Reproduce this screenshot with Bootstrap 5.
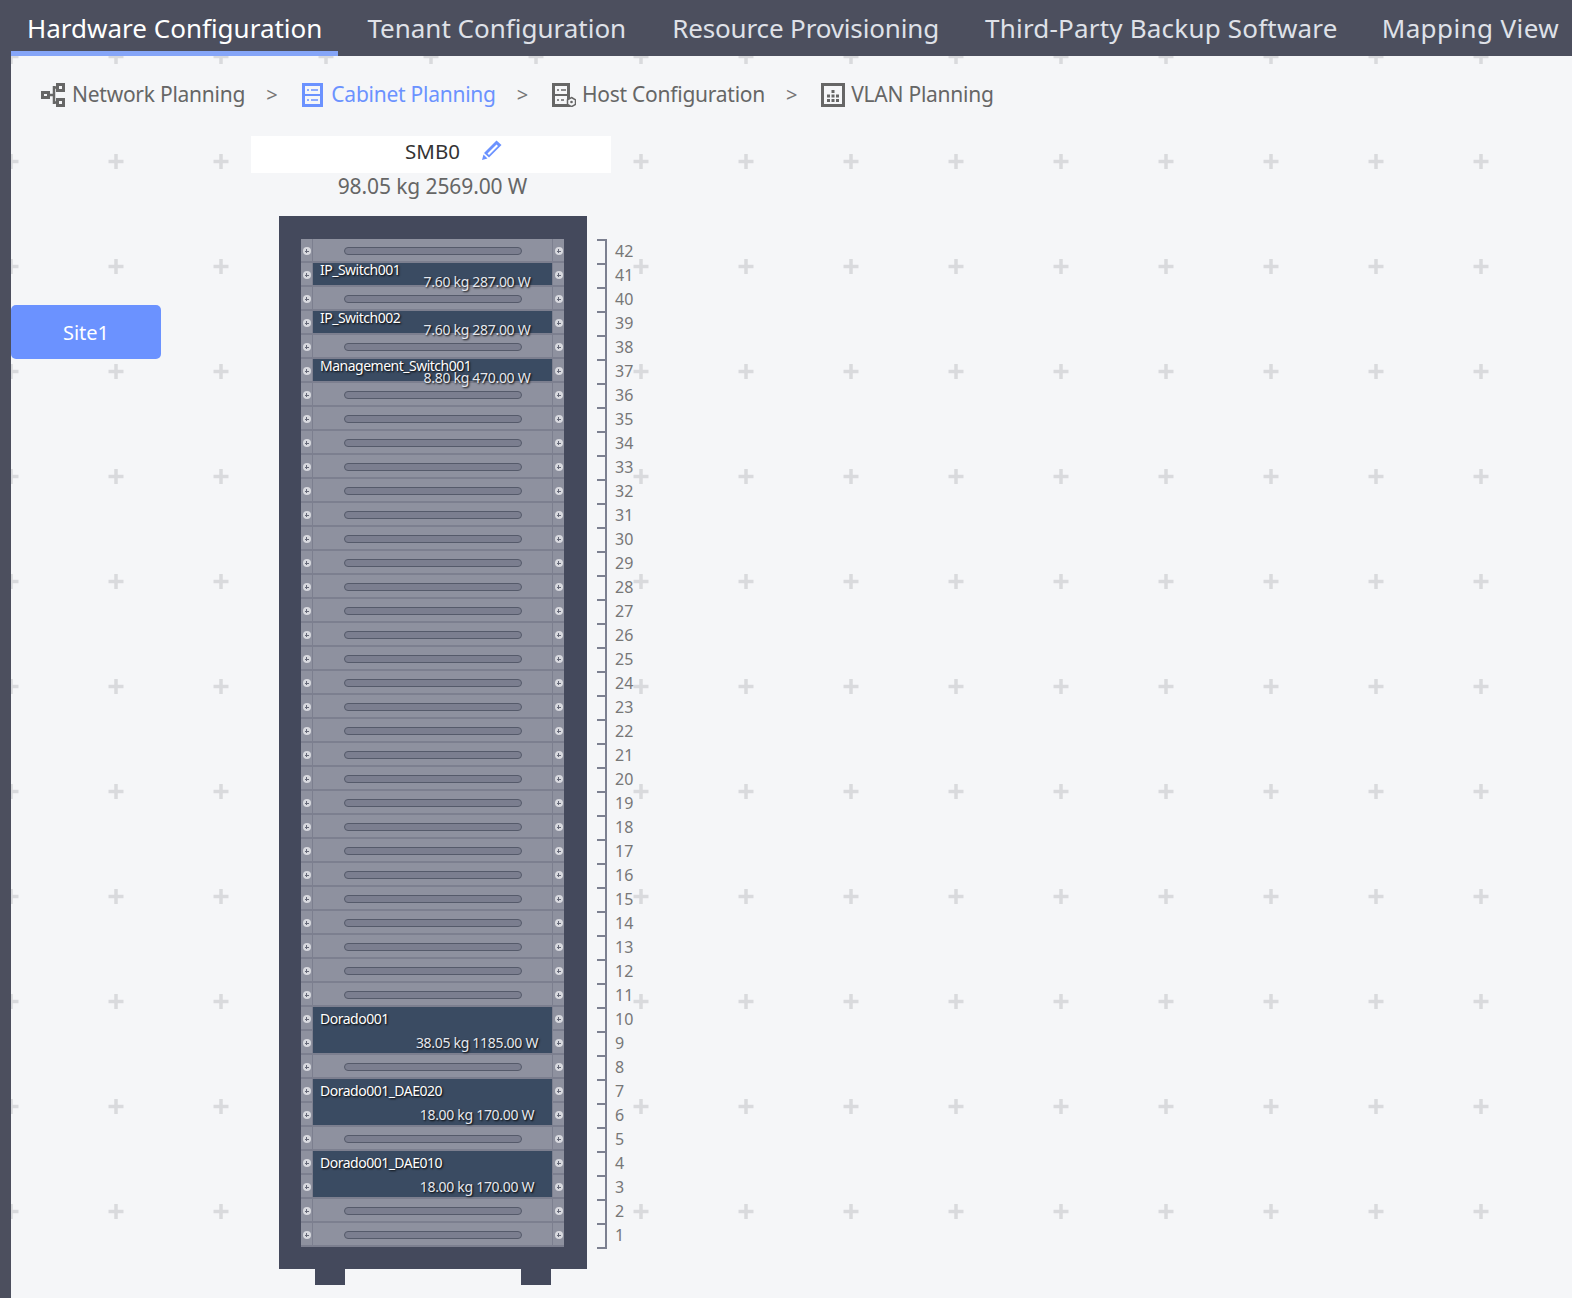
<!DOCTYPE html>
<html lang="en">
<head>
    <meta charset="UTF-8">
    <title>Cabinet Planning</title>
    <link href="https://cdn.jsdelivr.net/npm/bootstrap@5.3.0/dist/css/bootstrap.min.css" rel="stylesheet">
    <style>
        html, body { height: 100%; overflow: hidden; }
        body {
            font-family: "Noto Sans", sans-serif;
            background-color: #4c4f5e;
            padding-left: 11px;
        }
        .top-tabs { height: 56px; margin-left: -11px; padding-left: 11px; background: #4c4f5e; position: relative; z-index: 1; }
        .top-tab {
            padding: 0 16px;
            margin-right: 14px;
            height: 56px;
            font-size: 26px;
            color: #dfe1e8;
            white-space: nowrap;
            border-bottom: 5px solid transparent;
            text-decoration: none;
            line-height: 56px;
        }
        .top-tab.on { color: #fff; border-bottom-color: #85a5f8; margin-right: 13px; }
        .top-tab:nth-child(3) { letter-spacing: -.15px; }
        .top-tab:nth-child(4) { letter-spacing: .2px; margin-right: 12px; }
        .top-tab:nth-child(5) { letter-spacing: .4px; }
        .work-area {
            height: 1242px;
            background-color: #f5f6f8;
            background-image: url("data:image/svg+xml,%3Csvg xmlns='http://www.w3.org/2000/svg' width='105' height='105'%3E%3Cpath d='M44.500 52.500h15M52 45v15' stroke='%23d9dadd' stroke-width='3.500' fill='none'/%3E%3C/svg%3E");
            background-position: -52px -52px;
        }
        .flow-bar { height: 80px; padding: 0 0 2px 30px; font-size: 21px; letter-spacing: -.25px; color: #666; }
        .flow-step { color: #666; white-space: nowrap; gap: 6px; }
        .flow-step:first-child { gap: 7px; }
        .flow-step.on { color: #6b92ff; gap: 8px; }
        .flow-sep { margin: 0 25px 0 21px; font-size: 20px; color: #777; }
        .flow-step.on ~ .flow-sep { margin-right: 24px; }
        .site-col { width: 150px; margin-right: 90px; padding-top: 169px; }
        .site-btn {
            width: 150px; height: 54px; padding: 2px 0 0;
            background: #6b92ff; border: 0; border-radius: 5px;
            color: #fff; font-size: 20px;
        }
        .cab-col { width: 360px; }
        .cab-title { height: 37px; padding: 0 0 7px 3px; background: #fff; font-size: 20.500px; color: #333; }
        .cab-title svg { position: absolute; left: 100%; margin-left: 22px; top: 4px; }
        .cab-sub { height: 43px; padding-left: 3px; line-height: 26px; font-size: 21px; letter-spacing: -.1px; color: #666; text-align: center; }
        .cab-wrap { margin-left: 28px; }
        .cab-body { width: 308px; height: 1053px; padding: 23px 23px 0 22px; background: #44495c; }
        .cab-feet { width: 308px; padding: 0 36px; }
        .cab-foot { width: 30px; height: 16px; background: #44495c; }
        .rail { width: 12px; border-right: 1px solid #7c7f8f; background: #8e919f; }
        .rail.right { border-right: 0; border-left: 1px solid #7c7f8f; }
        .rail-cell { height: 24px; padding-top: 2px; border-bottom: 2px solid #7c7f8f; }
        .screw {
            width: 8px; height: 8px; border-radius: 50%;
            background: #d8d9df;
            position: relative;
        }
        .screw::before, .screw::after {
            content: ""; position: absolute; background: #666978;
        }
        .screw::before { left: 2px; top: 3.500px; width: 4px; height: 1px; }
        .screw::after { left: 3.500px; top: 2px; width: 1px; height: 4px; }
        .slots { width: 239px; }
        .slot { height: 24px; padding-top: 2px; background: #8e919f; border-bottom: 2px solid #7c7f8f; }
        .slot-bar { width: 178px; height: 8px; background: #7b7e8f; border: 1px solid #555a6a; border-radius: 4px; }
        .dev {
            background: #3a4b62; border-bottom: 2px solid #7c7f8f;
            padding-left: 7px; color: #fff; text-shadow: 1px 1px 2px #000;
            font-size: 14px; white-space: nowrap;
        }
        .dev-1u { height: 24px; line-height: 14px; }
        .dev-2u { height: 48px; line-height: 24px; }
        .dev-1u .dev-spec { line-height: 10px; }
        .dev-name { letter-spacing: -.5px; }
        .dev-spec { width: 150px; margin-left: auto; text-align: center; color: #e6e8ee; letter-spacing: -.3px; }
        .ruler { margin: 23px 0 0 10px; }
        .ruler-row { height: 24px; }
        .ruler-tick { width: 10px; height: 24px; border-top: 2px solid #7c8090; border-right: 2px solid #7c8090; }
        .ruler-row.last .ruler-tick { height: 26px; border-bottom: 2px solid #7c8090; }
        .ruler-num { margin-left: 8px; font-size: 16px; line-height: 24px; color: #777; }
    </style>
</head>
<body>
    <nav class="top-tabs d-flex">
        <a class="top-tab on" href="#">Hardware Configuration</a>
        <a class="top-tab" href="#">Tenant Configuration</a>
        <a class="top-tab" href="#">Resource Provisioning</a>
        <a class="top-tab" href="#">Third-Party Backup Software</a>
        <a class="top-tab" href="#">Mapping View</a>
    </nav>
    <div class="work-area">
        <div class="flow-bar d-flex align-items-center">
            <span class="flow-step d-flex align-items-center">
                <svg width="24" height="24" viewBox="0 0 24 24" fill="none" stroke="#666" stroke-width="3"><rect x="1.500" y="9.500" width="6" height="5"/><rect x="16.500" y="1.500" width="6" height="6"/><rect x="16.500" y="16.500" width="6" height="6"/><path d="M8 12h5M13 3v18M13 4.500h3M13 19.500h3" stroke-width="2.500"/></svg>
                Network Planning
            </span>
            <span class="flow-sep">&gt;</span>
            <span class="flow-step on d-flex align-items-center">
                <svg width="21" height="24" viewBox="0 0 21 24"><rect width="21" height="24" fill="#6b92ff"/><rect x="3" y="3" width="15" height="8" fill="#f5f6f8"/><rect x="3" y="13" width="15" height="8" fill="#f5f6f8"/><path d="M5 7h2M9 7h7M5 17h2M9 17h7" stroke="#6b92ff" stroke-width="1.500"/></svg>
                Cabinet Planning
            </span>
            <span class="flow-sep">&gt;</span>
            <span class="flow-step d-flex align-items-center">
                <svg width="24" height="24" viewBox="0 0 24 24" fill="none"><path d="M0 0h18v24H0z" fill="#666"/><rect x="3" y="3" width="12" height="8" fill="#f5f6f8"/><path d="M3 13h12v8H3z" fill="#f5f6f8"/><path d="M5 7h2M9 7h5M5 17h2M9 17h3" stroke="#666" stroke-width="1.500"/><path d="M19.500 14.500l4 2.300v4.600l-4 2.300-4-2.300v-4.600z" fill="#f5f6f8" stroke="#666" stroke-width="1.500"/><circle cx="19.500" cy="19" r="1.300" fill="#666"/></svg>
                Host Configuration
            </span>
            <span class="flow-sep">&gt;</span>
            <span class="flow-step d-flex align-items-center">
                <svg width="24" height="24" viewBox="0 0 24 24" fill="none"><rect x="1.500" y="1.500" width="21" height="21" stroke="#666" stroke-width="3"/><path d="M10.500 7h3v3h-3zM6 11.500h3v3H6zM10.500 11.500h3v3h-3zM15 11.500h3v3h-3zM6 16h3v3H6zM10.500 16h3v3h-3zM15 16h3v3h-3z" fill="#666"/></svg>
                VLAN Planning
            </span>
        </div>
        <div class="d-flex">
            <div class="site-col">
                <button class="site-btn btn" type="button">Site1</button>
            </div>
            <div class="cab-col">
                <div class="cab-title d-flex align-items-center justify-content-center">
                    <span class="position-relative">SMB0
                        <svg width="20" height="20" viewBox="0 0 20 20"><path d="M14.500 0.500L19.500 5 7 17.500 2 13z" fill="#6b92ff"/><path d="M14.500 4.500L16 6 7 15 5.500 13.500z" fill="#fff"/><path d="M1.500 14.500L5.500 18.500 0 20z" fill="#6b92ff"/></svg>
                    </span>
                </div>
                <div class="cab-sub">98.05 kg 2569.00 W</div>
                <div class="cab-wrap d-flex">
                    <div>
                        <div class="cab-body d-flex align-items-start">
                            <div class="rail" id="railLeft"></div>
                            <div class="slots" id="slots"></div>
                            <div class="rail right" id="railRight"></div>
                        </div>
                        <div class="cab-feet d-flex justify-content-between">
                            <div class="cab-foot"></div>
                            <div class="cab-foot"></div>
                        </div>
                    </div>
                    <div class="ruler" id="ruler"></div>
                </div>
            </div>
        </div>
    </div>
    <script src="https://cdn.jsdelivr.net/npm/bootstrap@5.3.0/dist/js/bootstrap.bundle.min.js"></script>
    <script>
        // top U of each device, keyed by rack position
        const devices = {
            41: { name: 'IP_Switch001', spec: '7.60 kg 287.00 W', size: 1 },
            39: { name: 'IP_Switch002', spec: '7.60 kg 287.00 W', size: 1 },
            37: { name: 'Management_Switch001', spec: '8.80 kg 470.00 W', size: 1 },
            10: { name: 'Dorado001', spec: '38.05 kg 1185.00 W', size: 2 },
            7: { name: 'Dorado001_DAE020', spec: '18.00 kg 170.00 W', size: 2 },
            4: { name: 'Dorado001_DAE010', spec: '18.00 kg 170.00 W', size: 2 }
        };
        const railCell = '<div class="rail-cell d-flex align-items-center justify-content-center"><div class="screw"></div></div>';
        let slotsHtml = '', rulerHtml = '';
        for (let u = 42; u >= 1; u--) {
            const last = u === 1 ? ' last' : '';
            rulerHtml += `<div class="ruler-row d-flex${last}"><div class="ruler-tick"></div><div class="ruler-num">${u}</div></div>`;
        }
        for (let u = 42; u >= 1; u--) {
            const d = devices[u];
            if (d) {
                slotsHtml += `<div class="dev dev-${d.size}u"><div class="dev-name">${d.name}</div><div class="dev-spec">${d.spec}</div></div>`;
                u -= d.size - 1;
            } else {
                slotsHtml += '<div class="slot d-flex align-items-center justify-content-center"><div class="slot-bar"></div></div>';
            }
        }
        document.getElementById('railLeft').innerHTML = railCell.repeat(42);
        document.getElementById('railRight').innerHTML = railCell.repeat(42);
        document.getElementById('slots').innerHTML = slotsHtml;
        document.getElementById('ruler').innerHTML = rulerHtml;
    </script>
</body>
</html>
